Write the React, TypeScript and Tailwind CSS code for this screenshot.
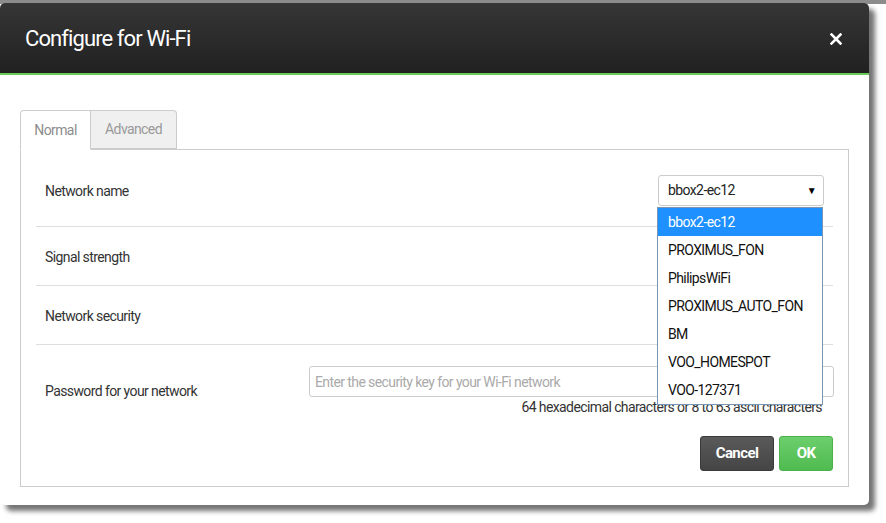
import React from "react";

const networks = [
  "bbox2-ec12",
  "PROXIMUS_FON",
  "PhilipsWiFi",
  "PROXIMUS_AUTO_FON",
  "BM",
  "VOO_HOMESPOT",
  "VOO-127371",
];

export default function App() {
  return (
    <div className="relative w-[886px] h-[523px] bg-white overflow-hidden font-['Roboto','Liberation_Sans',Arial,sans-serif] tracking-[-0.6px]">
      <div className="absolute left-0 top-0 w-full h-[4px] bg-[#8c8c8c]" />
      <div className="relative mt-[3px] w-[869px] h-[502px] bg-white rounded-[5px] shadow-[6px_6px_5px_rgba(0,0,0,0.55)] flex flex-col">
        {/* Header */}
        <div className="h-[72px] shrink-0 rounded-t-[5px] bg-gradient-to-b from-[#363636] to-[#212121] border-b-2 border-[#66cc55] flex items-center justify-between pl-[25px] pr-[27px]">
          <div className="text-white text-[22px] leading-none tracking-[-0.9px] pt-[1px]">Configure for Wi-Fi</div>
          <svg width="12" height="12" viewBox="0 0 12 12" className="mt-[1px]">
            <path d="M1.5 1.5 L10.5 10.5 M10.5 1.5 L1.5 10.5" stroke="white" strokeWidth="2.6" strokeLinecap="square" />
          </svg>
        </div>

        {/* Body */}
        <div className="flex-1 pt-[35px] px-[20px] pb-[18px] flex flex-col">
          {/* Tabs */}
          <div className="flex h-[40px] -mb-px relative z-10">
            <div className="w-[71px] h-[40px] bg-white border border-[#cccccc] border-b-white rounded-tl-[4px] flex items-center justify-center text-[14px] text-[#8c8c8c]">
              Normal
            </div>
            <div className="w-[86px] h-[39px] bg-[#f0f0f0] border border-l-0 border-[#cccccc] rounded-tr-[4px] flex items-center justify-center text-[14px] text-[#999999]">
              Advanced
            </div>
          </div>

          {/* Panel */}
          <div className="flex-1 border border-[#cccccc] px-[15px] text-[14px] text-[#333333]">
            {/* Row 1 */}
            <div className="h-[77px] border-b border-[#dddddd] flex items-center justify-between pl-[9px] pr-[9px] pt-[4px]">
              <div className="pt-[2px]">Network name</div>
              <div className="relative">
                <div className="w-[166px] h-[31px] border border-[#cccccc] rounded-[3px] bg-white flex items-center justify-between pl-[9px] pr-[7px] text-[#222222]">
                  <span className="pt-[1px]">bbox2-ec12</span>
                  <span className="text-[10px] text-black">▼</span>
                </div>
                <div className="absolute left-[-1px] top-[32px] w-[166px] border border-[#7a96b4] bg-white z-20">
                  {networks.map((n, i) => (
                    <div
                      key={n}
                      className={
                        i === 0
                          ? "h-[28px] flex items-center pl-[10px] pt-[2px] bg-[#1e90ff] text-white"
                          : "h-[28px] flex items-center pl-[10px] pt-[2px] text-[#111111]"
                      }
                    >
                      {n}
                    </div>
                  ))}
                </div>
              </div>
            </div>
            {/* Row 2 */}
            <div className="h-[59px] border-b border-[#dddddd] flex items-center pl-[9px] pt-[2px]">
              <div>Signal strength</div>
            </div>
            {/* Row 3 */}
            <div className="h-[59px] border-b border-[#dddddd] flex items-center pl-[9px] pt-[2px]">
              <div>Network security</div>
            </div>
            {/* Row 4 */}
            <div className="flex items-center pt-[21px]">
              <div className="w-[273px] pl-[9px]">Password for your network</div>
              <div className="flex-1 flex flex-col">
                <div className="h-[31px] border border-[#cccccc] rounded-[3px] flex items-center pl-[5px] pt-[1px] text-[#aaaaaa] mr-[-1px]">
                  Enter the security key for your Wi-Fi network
                </div>
                <div className="text-right pr-[11px] leading-[20px] text-[#333333]">
                  64 hexadecimal characters or 8 to 63 ascii characters
                </div>
              </div>
            </div>
            {/* Buttons */}
            <div className="flex justify-end gap-[5px] mt-[19px]">
              <div className="w-[74px] h-[35px] rounded-[3px] border border-[#3a3a3a] bg-gradient-to-b from-[#5a5a5a] to-[#454545] text-white font-bold text-[15px] flex items-center justify-center">
                Cancel
              </div>
              <div className="w-[54px] h-[35px] rounded-[3px] border border-[#4cb04c] bg-gradient-to-b from-[#6ccf6c] to-[#4fbb4f] text-white font-bold text-[15px] flex items-center justify-center">
                OK
              </div>
            </div>
          </div>
        </div>
      </div>
    </div>
  );
}
